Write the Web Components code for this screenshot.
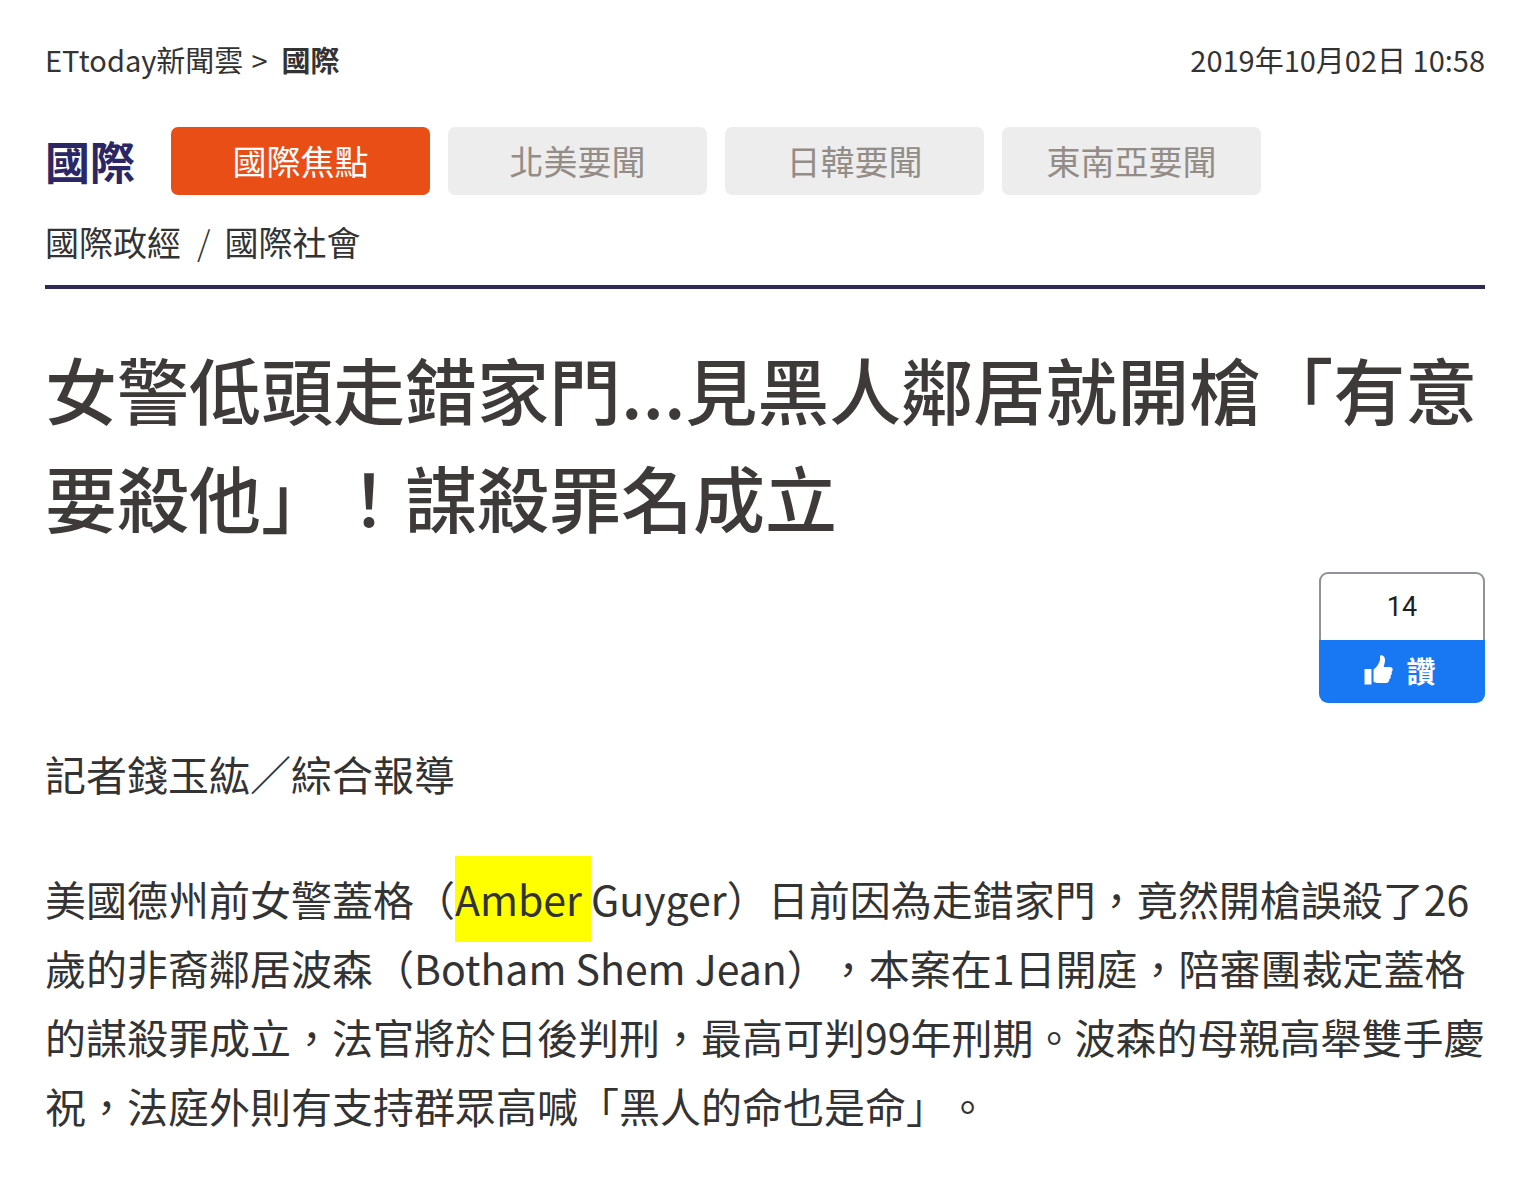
<!DOCTYPE html>
<html lang="zh-Hant">
<head>
<meta charset="utf-8">
<meta name="viewport" content="width=device-width, initial-scale=1">
<title>ETtoday新聞雲 國際</title>
<style>
body { margin: 0; background: #fff; color: #333; font-family: "Noto Sans CJK TC", "Noto Sans", sans-serif; text-spacing-trim: space-all; }
</style>
</head>
<body>
<news-page>
  <news-breadcrumb slot="top" section="國際" date="2019年10月02日 10:58">ETtoday新聞雲</news-breadcrumb>
  <channel-nav slot="top" name="國際">
    <channel-tab active>國際焦點</channel-tab>
    <channel-tab>北美要聞</channel-tab>
    <channel-tab>日韓要聞</channel-tab>
    <channel-tab>東南亞要聞</channel-tab>
    <channel-link slot="sub">國際政經</channel-link>
    <channel-link slot="sub">國際社會</channel-link>
  </channel-nav>
  <news-article>
    <span slot="title">女警低頭走錯家門...見黑人鄰居就開槍「有意要殺他」！謀殺罪名成立</span>
    <like-button slot="social" count="14">讚</like-button>
    <article-text>記者錢玉紘／綜合報導</article-text>
    <article-text>美國德州前女警蓋格（<text-highlight>Amber </text-highlight>Guyger）日前因為走錯家門，竟然開槍誤殺了26歲的非裔鄰居波森（Botham Shem Jean），本案在1日開庭，陪審團裁定蓋格的謀殺罪成立，法官將於日後判刑，最高可判99年刑期。波森的母親高舉雙手慶祝，法庭外則有支持群眾高喊「黑人的命也是命」。</article-text>
  </news-article>
</news-page>
<script>
class BaseElement extends HTMLElement {
  connectedCallback() {
    if (this.shadowRoot) return;
    this.attachShadow({ mode: "open" }).innerHTML = this.render();
  }
}

customElements.define("news-page", class extends BaseElement {
  render() {
    return `<style>
      :host { display: block; padding: 38px 45px 50px; }
    </style>
    <header><slot name="top"></slot></header>
    <main><slot></slot></main>`;
  }
});

customElements.define("news-breadcrumb", class extends BaseElement {
  render() {
    return `<style>
      :host { display: flex; justify-content: space-between; font-size: 29px; line-height: 42px; }
      a { color: inherit; text-decoration: none; }
      nav { display: flex; gap: 8px; }
      strong { margin-left: 6px; font-weight: 700; }
    </style>
    <nav><a href="#"><slot></slot></a><span>&gt;</span><strong>${this.getAttribute("section")}</strong></nav>
    <time datetime="2019-10-02T10:58">${this.getAttribute("date")}</time>`;
  }
});

customElements.define("channel-nav", class extends BaseElement {
  render() {
    return `<style>
      :host { display: block; margin-top: 47px; padding-bottom: 18px; border-bottom: 4px solid #2d2a55; }
      .row { display: flex; align-items: center; }
      h2 { flex: none; margin: 0 36px 0 0; font-size: 45px; line-height: 68px; font-weight: 700; color: #2b2665; }
      .tabs { flex: 1; display: flex; gap: 18px; }
      .sub { display: flex; margin-top: 22px; font-size: 34px; line-height: 50px; }
    </style>
    <div class="row">
      <h2>${this.getAttribute("name")}</h2>
      <nav class="tabs"><slot></slot></nav>
    </div>
    <nav class="sub"><slot name="sub"></slot></nav>`;
  }
});

customElements.define("channel-tab", class extends BaseElement {
  render() {
    return `<style>
      :host { flex: 0 1 259px; }
      a { display: block; border-radius: 7px; background: #ededed; color: #948c87; font-size: 34px; line-height: 68px; text-align: center; text-decoration: none; white-space: nowrap; }
      :host([active]) a { background: #e94e16; color: #fff; }
    </style>
    <a href="#"><slot></slot></a>`;
  }
});

customElements.define("channel-link", class extends BaseElement {
  render() {
    return `<style>
      :host { display: flex; }
      span { display: none; margin: 0 14px 0 16px; font-weight: 300; }
      :host(:not(:first-of-type)) span { display: block; }
      a { color: inherit; text-decoration: none; }
    </style>
    <span>/</span><a href="#"><slot></slot></a>`;
  }
});

customElements.define("news-article", class extends BaseElement {
  render() {
    return `<style>
      :host { display: block; }
      h1 { margin: 45px 0 0; font-size: 72px; line-height: 108px; font-weight: 500; color: #3e3a39; }
      .social { display: flex; justify-content: flex-end; margin: 22px 0 36px; }
      .body { display: flex; flex-direction: column; gap: 56px; }
    </style>
    <article>
      <h1><slot name="title"></slot></h1>
      <div class="social"><slot name="social"></slot></div>
      <div class="body"><slot></slot></div>
    </article>`;
  }
});

customElements.define("like-button", class extends BaseElement {
  render() {
    return `<style>
      :host { display: block; width: 166px; }
      .count { box-sizing: border-box; height: 68px; border: 2px solid #8f9399; border-bottom: 0; border-radius: 9px 9px 0 0; font: 27px/66px Roboto, sans-serif; color: #1c1e21; text-align: center; }
      button { display: flex; align-items: center; justify-content: center; gap: 13px; width: 100%; height: 63px; padding: 0 4px 3px 0; border: 0; border-radius: 0 0 9px 9px; background: #1877f2; color: #fff; font: inherit; font-size: 29px; font-weight: 700; line-height: 42px; cursor: pointer; }
      svg { width: 29px; height: 30px; }
    </style>
    <div class="count">${this.getAttribute("count")}</div>
    <button type="button">
      <svg viewBox="0 0 29 30" fill="#fff" aria-hidden="true"><path d="M0.500 14h7v15.500h-7z"/><path d="M9.500 14.500C13 12 15 8.500 16 5V1.500C16 .3 17 0 18 .3c2 .6 3 2.700 3 5 0 2.200-.8 4.500-1.300 6.700H26c1.700 0 2.700 1.200 2.700 2.500 0 1.200-.6 1.900-1.200 2.400.4.600.5 1.500.2 2.200-.2.800-.7 1.300-1.200 1.600.3.800.3 1.500 0 2.200-.3.700-.8 1.200-1.300 1.400.3 2-.9 3.700-3.200 3.700h-7c-2.200 0-3.700-.6-5.500-1.300z"/></svg>
      <span><slot></slot></span>
    </button>`;
  }
});

customElements.define("article-text", class extends BaseElement {
  render() {
    return `<style>
      :host { display: block; }
      p { margin: 0; font-size: 41px; line-height: 69px; }
    </style>
    <p><slot></slot></p>`;
  }
});

customElements.define("text-highlight", class extends BaseElement {
  render() {
    return `<style>
      :host { display: inline; }
      mark { padding: 12px 0 14px; background: #ff0; color: inherit; }
    </style><mark><slot></slot></mark>`;
  }
});
</script>
</body>
</html>
